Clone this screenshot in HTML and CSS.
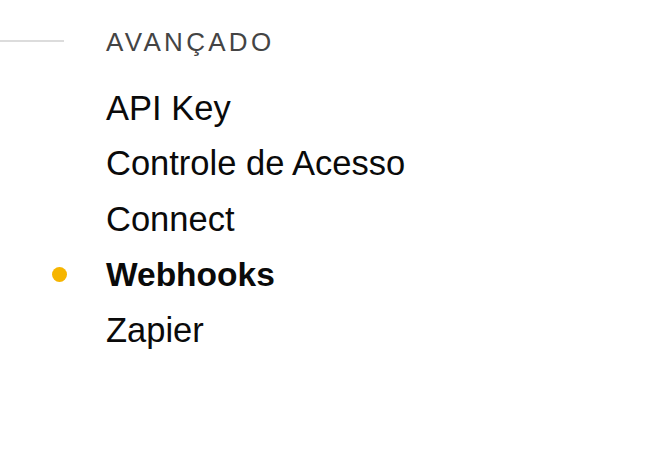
FILE: index.html
```html
<!DOCTYPE html>
<html lang="pt-BR">
<head>
<meta charset="utf-8">
<title>Avançado</title>
<link rel="stylesheet" href="styles.css">
</head>
<body>
<nav class="section">
  <div class="section-head">
    <span class="rule"></span>
    <h2 class="section-title">AVANÇADO</h2>
  </div>
  <ul class="menu">
    <li class="menu-item"><span class="marker"></span><a class="menu-link" href="#">API Key</a></li>
    <li class="menu-item"><span class="marker"></span><a class="menu-link" href="#">Controle de Acesso</a></li>
    <li class="menu-item"><span class="marker"></span><a class="menu-link" href="#">Connect</a></li>
    <li class="menu-item is-active"><span class="marker"><span class="dot"></span></span><a class="menu-link" href="#">Webhooks</a></li>
    <li class="menu-item"><span class="marker"></span><a class="menu-link" href="#">Zapier</a></li>
  </ul>
</nav>
</body>
</html>
```
FILE: styles.css
```css
html, body {
  margin: 0;
  padding: 0;
  background: #ffffff;
}

body {
  font-family: "Liberation Sans", Arial, Helvetica, sans-serif;
  color: #0a0a0a;
}

.section {
  padding-top: 27px;
}

.section-head {
  display: flex;
  align-items: flex-start;
  height: 30px;
}

.rule {
  width: 64px;
  height: 2px;
  margin-top: 13px;
  background: #dcdcdc;
  flex: none;
}

.section-title {
  margin: 0 0 0 42px;
  font-size: 26px;
  line-height: 30px;
  font-weight: normal;
  letter-spacing: 3.3px;
  color: #444444;
}

.menu {
  list-style: none;
  margin: 23.5px 0 0 0;
  padding: 0;
}

.menu-item {
  display: flex;
  align-items: center;
  height: 55.5px;
}

.marker {
  flex: none;
  width: 106px;
  display: flex;
  align-items: center;
  padding-left: 52px;
  box-sizing: border-box;
}

.dot {
  width: 15px;
  height: 15px;
  border-radius: 50%;
  background: #f6b500;
}

.menu-link {
  font-size: 34.5px;
  line-height: 55.5px;
  color: #0a0a0a;
  text-decoration: none;
}

.is-active .menu-link {
  font-weight: bold;
  font-size: 33.5px;
}
```
